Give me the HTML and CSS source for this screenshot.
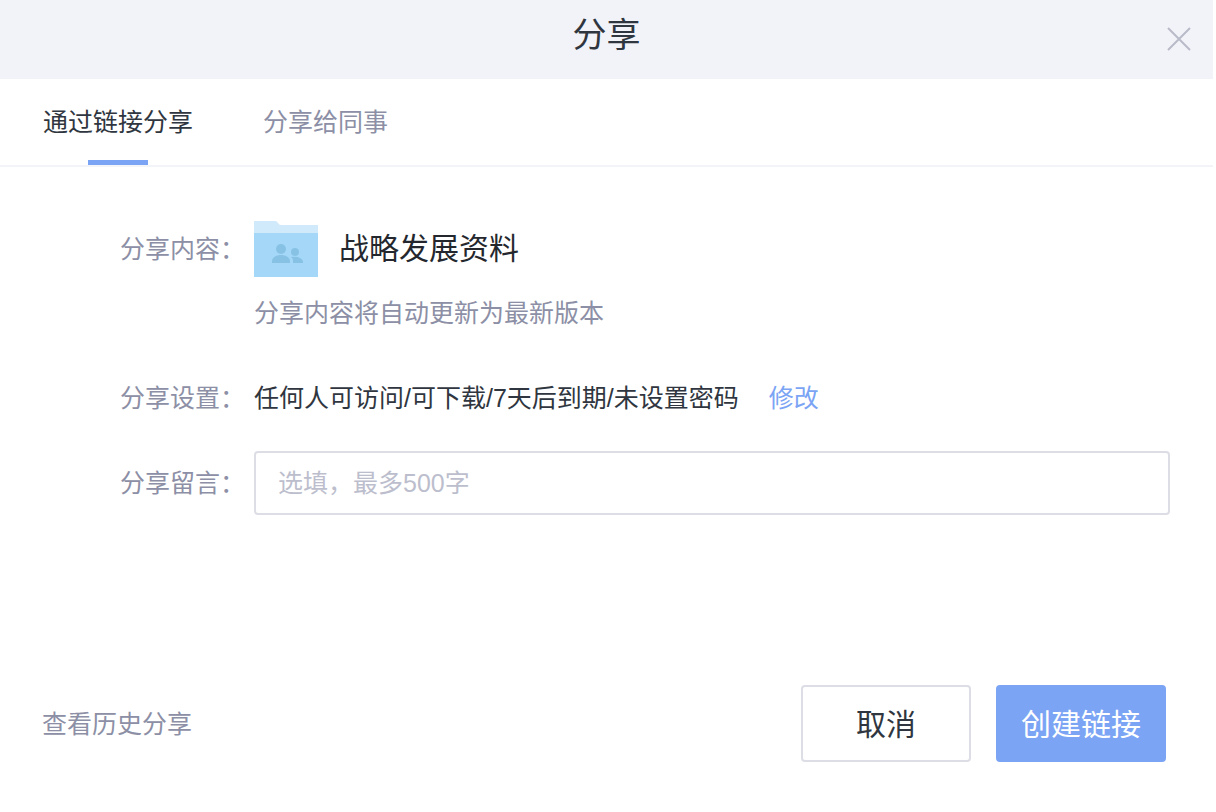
FILE: index.html
```html
<!DOCTYPE html>
<html lang="zh-CN">
	<head>
		<meta charset="utf-8">
		<title>分享</title>
		<link rel="stylesheet" href="styles.css">
	</head>
	<body>
		<div class="dialog" role="dialog" aria-labelledby="title">
			<header class="header">
				<h1 id="title">分享</h1>
				<button type="button" class="close" aria-label="关闭">
					<svg width="24" height="24" viewBox="0 0 24 24"><path d="M1 1l22 22M23 1L1 23" fill="none" stroke="#b9bbc9" stroke-width="2"/></svg>
				</button>
			</header>
			<nav class="tabs">
				<a href="#link" class="tab active">通过链接分享</a>
				<a href="#colleague" class="tab">分享给同事</a>
			</nav>
			<form class="form">
				<div class="row">
					<span class="label">分享内容：</span>
					<div class="file">
						<svg class="folder" width="64" height="56" viewBox="0 0 64 56">
							<path d="M0 0h21q2 0 3 2t3 2h37v10H0z" fill="#d0e9fb"/>
							<path d="M0 12h64v44H0z" fill="#a5d8f8"/>
							<g fill="#87c2e5">
								<circle cx="27" cy="28" r="5"/>
								<path d="M18 42v-2c0-4 5-6 9-6s9 2 9 6v2z"/>
								<circle cx="41" cy="31" r="4"/>
								<path d="M39 42v-2q0-3-2-4c6-1 12 1 12 5v1z"/>
							</g>
						</svg>
						<span class="name">战略发展资料</span>
					</div>
				</div>
				<p class="tip">分享内容将自动更新为最新版本</p>
				<div class="row">
					<span class="label">分享设置：</span>
					<div class="setting">
						<span>任何人可访问/可下载/7天后到期/未设置密码</span>
						<a href="#setting">修改</a>
					</div>
				</div>
				<div class="row">
					<label class="label" for="message">分享留言：</label>
					<input type="text" id="message" class="message" maxlength="500" placeholder="选填，最多500字">
				</div>
			</form>
			<footer class="footer">
				<a href="#history" class="history">查看历史分享</a>
				<button type="button" class="btn">取消</button>
				<button type="button" class="btn primary">创建链接</button>
			</footer>
		</div>
	</body>
</html>
```

FILE: styles.css
```css
* {
	box-sizing: border-box;
}
body {
	margin: 0;
	background: #fff;
	color: #303640;
	font: 25px/36px "Liberation Sans", "Noto Sans CJK SC", sans-serif;
}
a {
	text-decoration: none;
}
button, input {
	font-family: inherit;
}
.dialog {
	margin-right: 3px;
}
.header {
	display: grid;
	grid-template-columns: 1fr auto 1fr;
	align-items: center;
	padding: 10px 22px 19px;
	background: #f2f3f9;
}
.header h1 {
	grid-column: 2;
	margin: 0;
	font-size: 34px;
	line-height: 50px;
	font-weight: normal;
}
.close {
	justify-self: end;
	margin-top: 8px;
	padding: 0;
	border: 0;
	background: none;
	cursor: pointer;
}
.close svg {
	display: block;
}

/* tabs */
.tabs {
	display: flex;
	gap: 70px;
	padding: 0 43px;
	border-bottom: 2px solid #f3f4f8;
}
.tab {
	display: flex;
	flex-direction: column;
	align-items: center;
	padding-top: 25px;
	color: #8c8fa5;
}
.tab::after {
	content: "";
	width: 60px;
	height: 5px;
	margin-top: 20px;
}
.tab.active {
	color: #303640;
}
.tab.active::after {
	background: #7ba4f4;
}

/* form */
.form {
	padding: 54px 43px 0 120px;
}
.row {
	display: grid;
	grid-template-columns: 134px 1fr;
	align-items: center;
}
.label {
	color: #8c8fa5;
}
.file {
	display: flex;
	align-items: center;
	gap: 21px;
}
.name {
	color: #24282e;
	font-size: 30px;
}
.tip {
	margin: 18px 0 49px 134px;
	color: #8c8fa5;
}
.setting {
	display: flex;
	gap: 30px;
}
.setting a {
	color: #7ba4f4;
}
.message {
	width: 100%;
	height: 64px;
	margin-top: 35px;
	padding: 0 22px;
	border: 2px solid #dcdde5;
	border-radius: 4px;
	color: #303640;
	font-size: 25px;
}
.message::placeholder {
	color: #bcbecd;
}
label.label {
	margin-top: 35px;
}

/* footer */
.footer {
	display: flex;
	align-items: center;
	gap: 25px;
	padding: 170px 47px 50px 42px;
}
.history {
	margin-right: auto;
	color: #8c8fa5;
}
.btn {
	width: 170px;
	height: 77px;
	padding: 0 0 4px;
	border: 2px solid #dcdde5;
	border-radius: 4px;
	background: #fff;
	color: #303640;
	font-size: 30px;
	cursor: pointer;
}
.btn.primary {
	border-color: #7ba4f4;
	background: #7ba4f4;
	color: #fff;
}
```
